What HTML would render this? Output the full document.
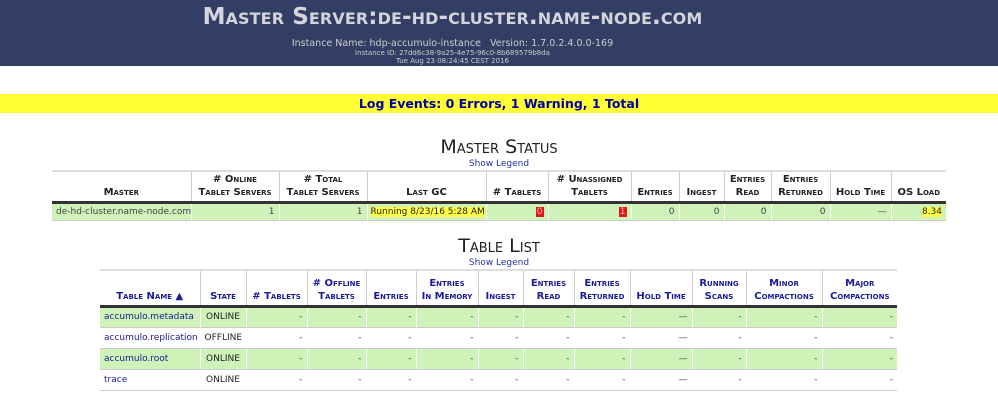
<!DOCTYPE html>
<html><head><style>
*{margin:0;padding:0;box-sizing:border-box}
body{width:998px;height:411px;background:#fff;font-family:"DejaVu Sans","Liberation Sans",sans-serif;position:relative;overflow:hidden}
#hdr{position:absolute;left:0;top:0;width:998px;height:66px;background:#323e63;color:#ccc;text-align:center}
#hdr h1{font-size:23px;font-variant:small-caps;font-weight:bold;position:absolute;top:4px;left:0;width:905px;text-align:center;color:#d4d4dc;letter-spacing:0.1px}
.s1{position:absolute;top:38px;left:0;width:905px;font-size:9.5px;text-align:center;color:#ccc}
.s2{position:absolute;top:49px;left:0;width:905px;font-size:7px;text-align:center;color:#ccc}
.s3{position:absolute;top:57px;left:0;width:905px;font-size:7px;text-align:center;color:#ccc}
#log{position:absolute;top:94px;left:0;width:998px;height:19px;background:#ffff33;color:#0000a0;font-weight:bold;font-size:12.5px;text-align:center;line-height:19px}
.title{position:absolute;left:0;width:998px;text-align:center;font-variant:small-caps;font-size:19px;color:#222}
.leg{position:absolute;left:0;width:998px;text-align:center;font-size:9px;color:#2233aa}
table{position:absolute;border-collapse:collapse;table-layout:fixed;font-size:9px}
th{font-variant:small-caps;font-size:10px;font-weight:bold;vertical-align:bottom;border-left:1px solid #ccc;border-bottom:3px solid #333;padding:0 1px 2px;line-height:13px;text-align:center;white-space:nowrap}
th:first-child{border-left:none}
td{border-left:1px solid #fff;border-bottom:1px solid #ccc;padding:0 4px;text-align:right;color:#444;white-space:nowrap}
td:first-child{text-align:left;border-left:none}
tr.g td{background:#cff2b8}
#t1{left:52px;top:170px;width:894px;border-top:2px solid #ddd}
#t1 th{color:#222;height:31px}
#t1 td{height:18px}
#t2{left:100px;top:269px;width:797px;border-top:2px solid #ddd}
#t2 th{color:#1a1a9a;height:36px}
#t2 td{height:21px}
#t2 td.n{color:#1a1a8a}
#t2 td.c{text-align:center;color:#222}
.red{background:#e01818;color:#fbb;padding:0 1px}
.yel{background:#ffff44;color:#222}
</style></head><body>
<div id="hdr">
<h1>Master Server:de-hd-cluster.name-node.com</h1>
<div class="s1">Instance Name: hdp-accumulo-instance &nbsp; Version: 1.7.0.2.4.0.0-169</div>
<div class="s2">Instance ID: 27dd6c38-9a25-4e75-96c0-8b689579b8da</div>
<div class="s3">Tue Aug 23 08:24:45 CEST 2016</div>
</div>
<div id="log">Log Events: 0 Errors, 1 Warning, 1 Total</div>
<div class="title" style="top:136px">Master Status</div>
<div class="leg" style="top:159px">Show Legend</div>
<table id="t1">
<colgroup><col style="width:139px"><col style="width:88px"><col style="width:88px"><col style="width:119px"><col style="width:62px"><col style="width:83px"><col style="width:48px"><col style="width:45px"><col style="width:47px"><col style="width:59px"><col style="width:61px"><col style="width:55px"></colgroup>
<tr><th>Master</th><th># Online<br>Tablet Servers</th><th># Total<br>Tablet Servers</th><th>Last GC</th><th># Tablets</th><th># Unassigned<br>Tablets</th><th>Entries</th><th>Ingest</th><th>Entries<br>Read</th><th>Entries<br>Returned</th><th>Hold Time</th><th>OS Load</th></tr>
<tr class="g"><td>de-hd-cluster.name-node.com</td><td>1</td><td>1</td><td style="text-align:left;padding-left:3px"><span class="yel">Running 8/23/16 5:28 AM</span></td><td><span class="red">0</span></td><td><span class="red">1</span></td><td>0</td><td>0</td><td>0</td><td>0</td><td>&mdash;</td><td><span class="yel">8.34</span></td></tr>
</table>
<div class="title" style="top:235px">Table List</div>
<div class="leg" style="top:258px">Show Legend</div>
<table id="t2">
<colgroup><col style="width:100px"><col style="width:46px"><col style="width:61px"><col style="width:59px"><col style="width:50px"><col style="width:62px"><col style="width:45px"><col style="width:51px"><col style="width:56px"><col style="width:62px"><col style="width:54px"><col style="width:76px"><col style="width:75px"></colgroup>
<tr><th>Table Name &#9650;</th><th>State</th><th># Tablets</th><th># Offline<br>Tablets</th><th>Entries</th><th>Entries<br>In Memory</th><th>Ingest</th><th>Entries<br>Read</th><th>Entries<br>Returned</th><th>Hold Time</th><th>Running<br>Scans</th><th>Minor<br>Compactions</th><th>Major<br>Compactions</th></tr>
<tr class="g"><td class="n">accumulo.metadata</td><td class="c">ONLINE</td><td>-</td><td>-</td><td>-</td><td>-</td><td>-</td><td>-</td><td>-</td><td>&mdash;</td><td>-</td><td>-</td><td>-</td></tr>
<tr><td class="n">accumulo.replication</td><td class="c">OFFLINE</td><td>-</td><td>-</td><td>-</td><td>-</td><td>-</td><td>-</td><td>-</td><td>&mdash;</td><td>-</td><td>-</td><td>-</td></tr>
<tr class="g"><td class="n">accumulo.root</td><td class="c">ONLINE</td><td>-</td><td>-</td><td>-</td><td>-</td><td>-</td><td>-</td><td>-</td><td>&mdash;</td><td>-</td><td>-</td><td>-</td></tr>
<tr><td class="n">trace</td><td class="c">ONLINE</td><td>-</td><td>-</td><td>-</td><td>-</td><td>-</td><td>-</td><td>-</td><td>&mdash;</td><td>-</td><td>-</td><td>-</td></tr>
</table>
</body></html>
